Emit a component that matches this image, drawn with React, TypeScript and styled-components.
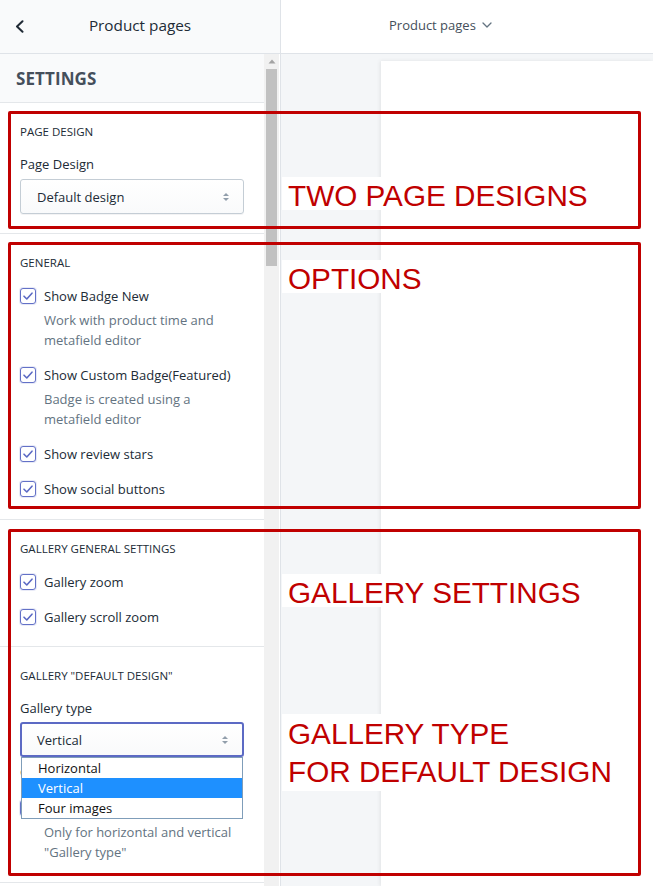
import React from "react";
import styled, { createGlobalStyle } from "styled-components";

const GlobalStyle = createGlobalStyle`
  html, body { margin: 0; padding: 0; background: #fff; }
  body {
    font-family: "Open Sans", "Noto Sans", Arial, sans-serif;
    color: #212b36;
  }
  * { box-sizing: border-box; }
`;

const Page = styled.div`
  position: relative;
  display: grid;
  grid-template-columns: 281px 1fr;
  width: 653px;
  height: 886px;
  overflow: hidden;
`;

/* ---------- Sidebar ---------- */
const Sidebar = styled.aside`
  display: flex;
  flex-direction: column;
  min-height: 0;
  border-right: 1px solid #dfe3e8;
  background: #fff;
`;

const SideHeader = styled.header`
  flex: none;
  height: 54px;
  display: grid;
  grid-template-columns: 40px 1fr 40px;
  align-items: center;
  background: #f9fafb;
  border-bottom: 1px solid #dfe3e8;
`;

const BackButton = styled.span`
  display: flex;
  align-items: center;
  padding-left: 15px;
  color: #212b36;
`;

const SideTitle = styled.h1`
  margin: 0 0 4px;
  text-align: center;
  font-size: 15.3px;
  font-weight: 400;
  color: #212b36;
`;

const SideBody = styled.div`
  flex: 1;
  min-height: 0;
  display: flex;
  overflow: hidden;
`;

const ScrollArea = styled.div`
  flex: none;
  width: 264px;
  display: flex;
  flex-direction: column;
`;

const ScrollTrack = styled.div`
  flex: none;
  width: 15px;
  background: #f1f1f1;
  display: flex;
  flex-direction: column;
  align-items: center;
`;

const ScrollArrow = styled.div`
  height: 15px;
  width: 100%;
  display: flex;
  align-items: center;
  justify-content: center;
`;

const ScrollThumb = styled.div`
  width: 11px;
  height: 197px;
  background: #c1c1c1;
`;

const SettingsHeader = styled.div`
  flex: none;
  height: 49px;
  display: flex;
  align-items: center;
  padding-left: 16px;
  background: #f9fafb;
  border-bottom: 1px solid #e4e7ea;
  font-size: 17px;
  font-weight: 700;
  color: #454f5b;
  letter-spacing: 0.1px;
`;

const Section = styled.section<{ $pt?: number; $pb?: number }>`
  display: flex;
  flex-direction: column;
  padding: ${(p) => p.$pt ?? 20}px 20px ${(p) => p.$pb ?? 20}px;
  border-bottom: 1px solid #e4e7ea;
`;

const SectionHeading = styled.h2<{ $mb: number }>`
  margin: 0 0 ${(p) => p.$mb}px;
  font-size: 11.5px;
  line-height: 18px;
  font-weight: 400;
  text-transform: uppercase;
  color: #212b36;
`;

const FieldLabel = styled.div<{ $mb?: number }>`
  margin-bottom: ${(p) => p.$mb ?? 0}px;
  font-size: 13px;
  line-height: 20px;
  color: #212b36;
`;

const SelectWrap = styled.div`
  position: relative;
`;

const SelectBox = styled.div<{ $focused?: boolean }>`
  height: 35px;
  display: flex;
  align-items: center;
  justify-content: space-between;
  padding: 0 13px 0 ${(p) => (p.$focused ? 15 : 16)}px;
  border: ${(p) => (p.$focused ? "2px solid #5c6ac4" : "1px solid #c4cdd5")};
  border-radius: 3px;
  background: linear-gradient(#ffffff, #f9fafb);
  box-shadow: 0 1px 0 rgba(22, 29, 37, 0.05);
  font-size: 13px;
  color: #212b36;
`;

const DropList = styled.ul`
  position: absolute;
  top: 100%;
  left: 1px;
  right: 1px;
  margin: 0;
  padding: 0;
  list-style: none;
  background: #fff;
  border: 1px solid #7f9db9;
  z-index: 2;
`;

const DropOption = styled.li<{ $selected?: boolean }>`
  height: 20px;
  line-height: 20px;
  padding-left: 16px;
  font-size: 13px;
  color: ${(p) => (p.$selected ? "#fff" : "#111")};
  background: ${(p) => (p.$selected ? "#1e90ff" : "transparent")};
`;

const ChoiceList = styled.div<{ $gap?: number }>`
  display: flex;
  flex-direction: column;
  gap: ${(p) => p.$gap ?? 15}px;
`;

const Choice = styled.div<{ $mt?: number }>`
  display: flex;
  flex-direction: column;
  margin-top: ${(p) => p.$mt ?? 0}px;
`;

const ChoiceRow = styled.label`
  display: flex;
  align-items: flex-start;
  gap: 8px;
  font-size: 13px;
  line-height: 20px;
  color: #212b36;
`;

const CheckBox = styled.span`
  flex: none;
  width: 16px;
  height: 16px;
  margin-top: 2px;
  display: flex;
  align-items: center;
  justify-content: center;
  border: 1px solid #6371c7;
  border-radius: 3px;
  background: #fff;
  box-shadow: 0 0 0 1px rgba(99, 113, 199, 0.15);
`;

const HelpText = styled.div`
  margin-top: 4px;
  padding-left: 24px;
  font-size: 13px;
  line-height: 20px;
  color: #637381;
`;

const HiddenLine = styled.div`
  margin-top: 5px;
  font-size: 13px;
  line-height: 20px;
  color: #212b36;
`;

/* ---------- Preview ---------- */
const Preview = styled.main`
  display: flex;
  flex-direction: column;
  min-width: 0;
`;

const PreviewHeader = styled.header`
  flex: none;
  height: 54px;
  display: flex;
  align-items: center;
  gap: 6px;
  padding: 0 0 4px 108px;
  background: #fff;
  border-bottom: 1px solid #dfe3e8;
  font-size: 13px;
  color: #454f5b;
`;

const Canvas = styled.div`
  flex: 1;
  display: flex;
  padding: 7px 0 0 100px;
  background: #f4f6f8;
`;

const PageCard = styled.div`
  flex: 1;
  background: #fff;
  box-shadow: -1px 0 4px rgba(0, 0, 0, 0.08);
`;

/* ---------- Annotations ---------- */
const Overlay = styled.div`
  position: absolute;
  inset: 0;
  pointer-events: none;
  z-index: 5;
`;

const Frame = styled.div<{ $top: number; $height: number }>`
  position: absolute;
  left: 8px;
  width: 633px;
  top: ${(p) => p.$top}px;
  height: ${(p) => p.$height}px;
  border: 3px solid #c00000;
  border-radius: 2px;
`;

const Callout = styled.div<{ $top: number; $lh?: number; $pt?: number }>`
  position: absolute;
  left: 282px;
  top: ${(p) => p.$top}px;
  padding: ${(p) => p.$pt ?? 5}px 8px 0 6px;
  background: #fff;
  font-family: "Liberation Sans", Arial, sans-serif;
  font-size: 29.7px;
  line-height: ${(p) => p.$lh ?? 28}px;
  color: #c00000;
  white-space: pre;
`;

const Check = () => (
  <CheckBox>
    <svg width="12" height="10" viewBox="0 0 12 10" fill="none">
      <path d="M2 5.2 L4.8 8 L10 2.2" stroke="#5c6ac4" strokeWidth="1.6" strokeLinecap="round" strokeLinejoin="round" />
    </svg>
  </CheckBox>
);

const SelectArrows = () => (
  <svg width="8" height="12" viewBox="0 0 8 12">
    <path d="M4 2 L7 5 H1 Z" fill="#919eab" />
    <path d="M4 10 L1 7 H7 Z" fill="#919eab" />
  </svg>
);

type ChoiceItem = { label: string; help?: string[] };

const CheckChoice = ({ item, mt }: { item: ChoiceItem; mt?: number }) => (
  <Choice $mt={mt}>
    <ChoiceRow>
      <Check />
      <span>{item.label}</span>
    </ChoiceRow>
    {item.help && (
      <HelpText>
        {item.help.map((l) => (
          <div key={l}>{l}</div>
        ))}
      </HelpText>
    )}
  </Choice>
);

const generalChoices: ChoiceItem[] = [
  { label: "Show Badge New", help: ["Work with product time and", "metafield editor"] },
  { label: "Show Custom Badge(Featured)", help: ["Badge is created using a", "metafield editor"] },
  { label: "Show review stars" },
  { label: "Show social buttons" },
];

const galleryChoices: ChoiceItem[] = [{ label: "Gallery zoom" }, { label: "Gallery scroll zoom" }];

export default function App() {
  return (
    <>
      <GlobalStyle />
      <Page>
        <Sidebar>
          <SideHeader>
            <BackButton>
              <svg width="9" height="13" viewBox="0 0 9 13" fill="none">
                <path d="M7.5 1.2 L2 6.5 L7.5 11.8" stroke="#212b36" strokeWidth="2" strokeLinecap="round" strokeLinejoin="round" />
              </svg>
            </BackButton>
            <SideTitle>Product pages</SideTitle>
            <span />
          </SideHeader>
          <SideBody>
            <ScrollArea>
              <SettingsHeader>SETTINGS</SettingsHeader>

              <Section $pb={19}>
                <SectionHeading $mb={13}>Page design</SectionHeading>
                <FieldLabel $mb={5}>Page Design</FieldLabel>
                <SelectBox>
                  <span>Default design</span>
                  <SelectArrows />
                </SelectBox>
              </Section>

              <Section>
                <SectionHeading $mb={14}>General</SectionHeading>
                <ChoiceList>
                  {generalChoices.map((c) => (
                    <CheckChoice key={c.label} item={c} />
                  ))}
                </ChoiceList>
              </Section>

              <Section $pb={19}>
                <SectionHeading $mb={14}>Gallery general settings</SectionHeading>
                <ChoiceList>
                  {galleryChoices.map((c) => (
                    <CheckChoice key={c.label} item={c} />
                  ))}
                </ChoiceList>
              </Section>

              <Section>
                <SectionHeading $mb={13}>Gallery "default design"</SectionHeading>
                <FieldLabel $mb={4}>Gallery type</FieldLabel>
                <SelectWrap>
                  <SelectBox $focused>
                    <span>Vertical</span>
                    <SelectArrows />
                  </SelectBox>
                  <DropList>
                    <DropOption>Horizontal</DropOption>
                    <DropOption $selected>Vertical</DropOption>
                    <DropOption>Four images</DropOption>
                  </DropList>
                </SelectWrap>
                <HiddenLine>Gallery thumbnails</HiddenLine>
                <CheckChoice
                  mt={16}
                  item={{ label: "Show gallery arrows", help: ["Only for horizontal and vertical", "\"Gallery type\""] }}
                />
              </Section>
            </ScrollArea>
            <ScrollTrack>
              <ScrollArrow>
                <svg width="8" height="5" viewBox="0 0 8 5">
                  <path d="M4 0.5 L7.5 4.5 H0.5 Z" fill="#a3a3a3" />
                </svg>
              </ScrollArrow>
              <ScrollThumb />
            </ScrollTrack>
          </SideBody>
        </Sidebar>

        <Preview>
          <PreviewHeader>
            <span>Product pages</span>
            <svg width="10" height="6" viewBox="0 0 10 6" fill="none">
              <path d="M1 1 L5 5 L9 1" stroke="#637381" strokeWidth="1.3" strokeLinecap="round" strokeLinejoin="round" />
            </svg>
          </PreviewHeader>
          <Canvas>
            <PageCard />
          </Canvas>
        </Preview>

        <Overlay>
          <Frame $top={111} $height={118} />
          <Frame $top={242} $height={267} />
          <Frame $top={529} $height={347} />
          <Callout $top={177}>TWO PAGE DESIGNS</Callout>
          <Callout $top={260}>OPTIONS</Callout>
          <Callout $top={574}>GALLERY SETTINGS</Callout>
          <Callout $top={714} $lh={38} $pt={1}>{"GALLERY TYPE\nFOR DEFAULT DESIGN"}</Callout>
        </Overlay>
      </Page>
    </>
  );
}
